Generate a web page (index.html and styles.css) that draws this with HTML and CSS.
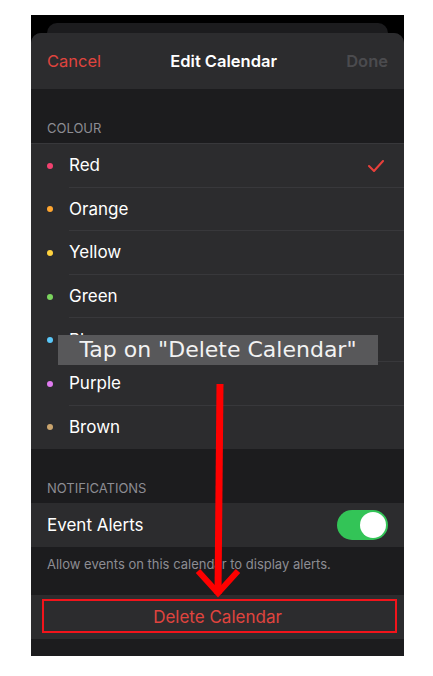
FILE: index.html
```html
<!DOCTYPE html>
<html>
  <head>
    <title>Edit Calendar</title>
    <link rel="stylesheet" href="styles.css">
  </head>
  <body>
  <div class="phone">
    <div class="back"></div>
    <div class="sheet">
      <div class="nav">
        <span class="cancel">Cancel</span>
        <span class="title">Edit Calendar</span>
        <span class="done">Done</span>
      </div>

      <div class="head">COLOUR</div>
      <ul class="group colours">
        <li><i class="dot" style="background:#f2416f"></i><span>Red</span>
          <svg class="check" width="16" height="12" viewBox="0 0 16 12"><path d="M1 6 L6 11 L15 1" fill="none" stroke="#e8403b" stroke-width="2" stroke-linecap="round" stroke-linejoin="round"/></svg>
        </li>
        <li><i class="dot" style="background:#ffa630"></i><span>Orange</span></li>
        <li><i class="dot" style="background:#ffd33f"></i><span>Yellow</span></li>
        <li><i class="dot" style="background:#7bd45e"></i><span>Green</span></li>
        <li><i class="dot" style="background:#5ac8fa"></i><span>Blue</span></li>
        <li><i class="dot" style="background:#e07bf0"></i><span>Purple</span></li>
        <li><i class="dot" style="background:#c9a46e"></i><span>Brown</span></li>
      </ul>

      <div class="head">NOTIFICATIONS</div>
      <div class="group alerts">
        <span>Event Alerts</span>
        <span class="toggle"><span class="knob"></span></span>
      </div>
      <div class="foot">Allow events on this calendar to display alerts.</div>

      <div class="group delete">Delete Calendar</div>
    </div>

    <!-- tutorial annotations -->
    <div class="label">Tap on "Delete Calendar"</div>
    <div class="mark"></div>
    <svg class="arrow" width="373" height="641" viewBox="0 0 373 641">
      <path d="M189 369 L187 579" stroke="#ff0000" stroke-width="7" fill="none"/>
      <path d="M167 556 L187 578 L207 556" stroke="#ff0000" stroke-width="6" fill="none"/>
    </svg>
  </div>
  </body>
</html>
```

FILE: styles.css
```css
body {
  margin: 0;
  background: #fff;
  font-family: Inter, "Liberation Sans", sans-serif;
}

.phone {
  position: relative;
  width: 373px;
  height: 641px;
  margin: 15px 0 0 31px;
  background: #000;
  overflow: hidden;
}

.back {
  height: 10px;
  margin: 8px 16px 0;
  border-radius: 10px 10px 0 0;
  background: #1c1c1e;
}

.sheet {
  height: 623px;
  border-radius: 10px 10px 0 0;
  background: #1c1c1e;
  overflow: hidden;
}

.nav {
  height: 56px;
  padding: 0 16px;
  display: flex;
  align-items: center;
  justify-content: space-between;
  background: #2c2c2e;
  font-size: 16.5px;
}
.cancel { color: #e0443e; }
.title { color: #fff; font-weight: 600; }
.done { color: #4b4b4e; font-weight: 600; }

.head {
  padding: 0 16px 7px;
  height: 47px;
  box-sizing: border-box;
  height: 54px;
  display: flex;
  align-items: flex-end;
  color: #8d8d93;
  font-size: 13px;
}

.group {
  background: #2c2c2e;
  color: #fff;
  font-size: 17px;
}

.colours {
  list-style: none;
  margin: 0;
  padding: 0;
  border-top: 1px solid #38383b;
}
.colours li {
  height: 43.6px;
  display: flex;
  align-items: center;
  padding-left: 16px;
  position: relative;
}
.colours li span {
  flex-grow: 1;
  align-self: stretch;
  display: flex;
  align-items: center;
  margin-left: 16px;
  border-bottom: 1px solid #38383b;
}
.colours li:last-child span { border-bottom: none; }
.dot {
  width: 6px;
  height: 6px;
  border-radius: 50%;
}
.check {
  position: absolute;
  right: 20px;
  top: 16px;
}

.alerts {
  height: 43.5px;
  padding: 0 16px;
  display: flex;
  align-items: center;
  justify-content: space-between;
}
.toggle {
  width: 51px;
  height: 30px;
  border-radius: 15px;
  background: #33c457;
  display: flex;
  align-items: center;
  justify-content: flex-end;
  padding-right: 2px;
  box-sizing: border-box;
}
.knob {
  width: 26px;
  height: 26px;
  border-radius: 50%;
  background: #fff;
}

.foot {
  padding: 9px 16px 0;
  height: 48px;
  box-sizing: border-box;
  color: #8d8d93;
  font-size: 13px;
}

.delete {
  height: 44px;
  display: flex;
  align-items: center;
  justify-content: center;
  color: #e0443e;
}

.label {
  position: absolute;
  left: 27px;
  top: 320px;
  width: 320px;
  height: 30px;
  background: #58585a;
  color: #f2f2f2;
  font-family: "DejaVu Sans", sans-serif;
  font-size: 22px;
  line-height: 30px;
  text-align: center;
}

.mark {
  position: absolute;
  left: 11px;
  top: 584px;
  width: 355px;
  height: 34px;
  box-sizing: border-box;
  border: 2px solid #f2141b;
}

.arrow {
  position: absolute;
  left: 0;
  top: 0;
  pointer-events: none;
}
```
